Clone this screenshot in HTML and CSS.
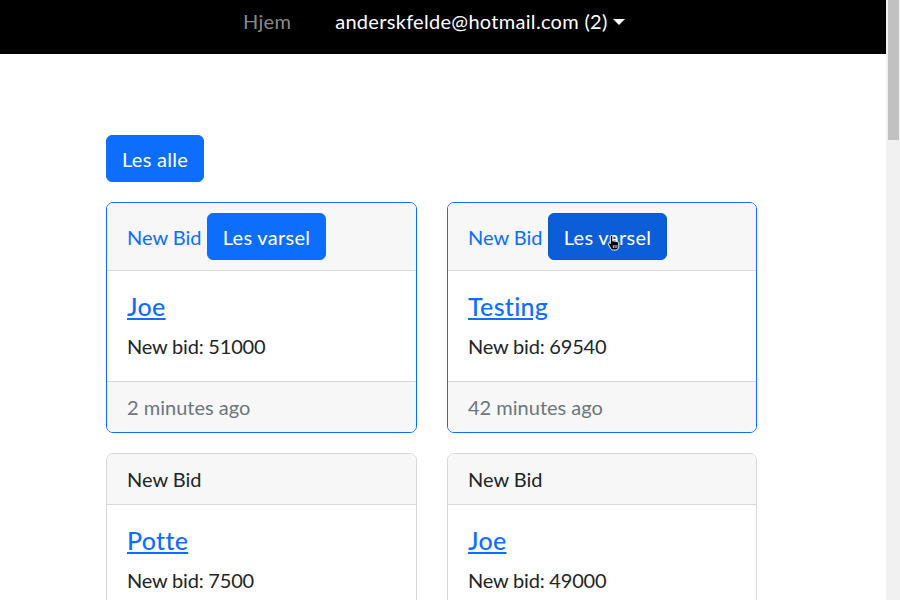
FILE: index.html
```html
<!DOCTYPE html>
<html lang="no">
<head>
<meta charset="utf-8">
<title>Varsler</title>
<link rel="stylesheet" href="styles.css">
</head>
<body>
<header class="navbar">
  <nav class="nav">
    <a class="nav-link muted" href="#">Hjem</a>
    <a class="nav-link user dropdown-toggle" href="#">anderskfelde@hotmail.com (2)</a>
  </nav>
</header>
<main class="page">
  <button class="btn">Les alle</button>
  <div class="grid">
    <div class="card unread">
      <div class="card-header">New Bid <button class="btn">Les varsel</button></div>
      <div class="card-body">
        <h5 class="card-title"><a href="#">Joe</a></h5>
        <p class="card-text">New bid: 51000</p>
      </div>
      <div class="card-footer">2 minutes ago</div>
    </div>
    <div class="card unread">
      <div class="card-header">New Bid <span class="hover-wrap"><button class="btn hover">Les varsel</button><svg class="cursor" width="14" height="17" viewBox="0 0 14 17"><path d="M4.5 1.5c.8 0 1.3.5 1.3 1.3v4.4c.3-.5 1.9-.5 2.1.3.4-.6 1.9-.5 2 .5.5-.5 1.9-.3 1.9.8v3.8c0 1.8-1.3 3.4-3.2 3.4H6.3c-1.2 0-2-.6-2.6-1.5L1.3 10c-.5-.8.5-1.8 1.4-1.1l.6.6V2.8c0-.8.4-1.3 1.2-1.3z" fill="#000" stroke="#fff" stroke-width="1"/><path d="M6.3 11v3M8.1 11v3M9.9 11v3" stroke="#fff" stroke-width=".8"/></svg></span></div>
      <div class="card-body">
        <h5 class="card-title"><a href="#">Testing</a></h5>
        <p class="card-text">New bid: 69540</p>
      </div>
      <div class="card-footer">42 minutes ago</div>
    </div>
    <div class="card">
      <div class="card-header">New Bid</div>
      <div class="card-body">
        <h5 class="card-title"><a href="#">Potte</a></h5>
        <p class="card-text">New bid: 7500</p>
      </div>
      <div class="card-footer">1 hour ago</div>
    </div>
    <div class="card">
      <div class="card-header">New Bid</div>
      <div class="card-body">
        <h5 class="card-title"><a href="#">Joe</a></h5>
        <p class="card-text">New bid: 49000</p>
      </div>
      <div class="card-footer">2 hours ago</div>
    </div>
    <div class="card">
      <div class="card-header">New Bid</div>
      <div class="card-body">
        <h5 class="card-title"><a href="#">Testing</a></h5>
        <p class="card-text">New bid: 65000</p>
      </div>
      <div class="card-footer">3 hours ago</div>
    </div>
    <div class="card">
      <div class="card-header">New Bid</div>
      <div class="card-body">
        <h5 class="card-title"><a href="#">Potte</a></h5>
        <p class="card-text">New bid: 7000</p>
      </div>
      <div class="card-footer">5 hours ago</div>
    </div>
  </div>
</main>
<div class="scrollbar"><div class="thumb"></div></div>
</body>
</html>
```
FILE: styles.css
```css
html, body {
  margin: 0;
  padding: 0;
}
body {
  font-family: Lato, "Noto Sans", sans-serif;
  font-size: 20px;
  line-height: 1.5;
  color: #212529;
  background: #fff;
  margin-right: 14px;
}
.navbar {
  background: #000;
  height: 54px;
  box-sizing: border-box;
  padding-top: 6px;
}
.nav {
  display: flex;
  padding-left: 243px;
  gap: 44px;
}
.nav-link {
  text-decoration: none;
  color: #fff;
  line-height: 30px;
  letter-spacing: 0.3px;
}
.nav-link.muted {
  color: rgba(255, 255, 255, 0.55);
}
.dropdown-toggle::after {
  content: "";
  display: inline-block;
  margin-left: 5px;
  vertical-align: 4px;
  border-top: 6px solid #fff;
  border-left: 6px solid transparent;
  border-right: 6px solid transparent;
}
.page {
  padding: 81px 0 40px 106px;
}
.btn {
  font: inherit;
  line-height: 30px;
  letter-spacing: 0.3px;
  color: #fff;
  background: #0d6efd;
  border: 1px solid #0d6efd;
  border-radius: 6px;
  padding: 7.5px 15px;
  cursor: pointer;
}
.btn.hover {
  background: #0b5ed7;
  border-color: #0a58ca;
}
.page > .btn {
  margin-bottom: 20px;
}
.grid {
  display: grid;
  grid-template-columns: 311px 310px;
  column-gap: 30px;
  row-gap: 20px;
}
.card {
  border: 1px solid #d9d9d9;
  border-radius: 7px;
  overflow: hidden;
}
.card.unread {
  border-color: #0d6efd;
}
.card-header {
  background: #f7f7f7;
  padding: 10px 20px;
  border-bottom: 1px solid #d9d9d9;
}
.card.unread .card-header {
  color: #0d6efd;
}
.card-body {
  padding: 20px;
}
.card-title {
  margin: 0 0 10px;
  font-size: 25px;
  font-weight: 500;
  line-height: 1.2;
  letter-spacing: 0.3px;
}
.card-title a {
  color: #0d6efd;
}
.card-text {
  margin: 0;
  letter-spacing: -0.2px;
}
.card-footer {
  background: #f7f7f7;
  padding: 10px 20px;
  border-top: 1px solid #d9d9d9;
  color: #6c757d;
}
.hover-wrap {
  position: relative;
  display: inline-block;
}
.cursor {
  position: absolute;
  left: 59px;
  top: 21px;
}
.scrollbar {
  position: fixed;
  top: 0;
  right: 0;
  width: 14px;
  height: 100vh;
  background: #f1f1f1;
}
.thumb {
  margin: 0 1px 0 2px;
  height: 140px;
  background: #c1c1c1;
}
```
